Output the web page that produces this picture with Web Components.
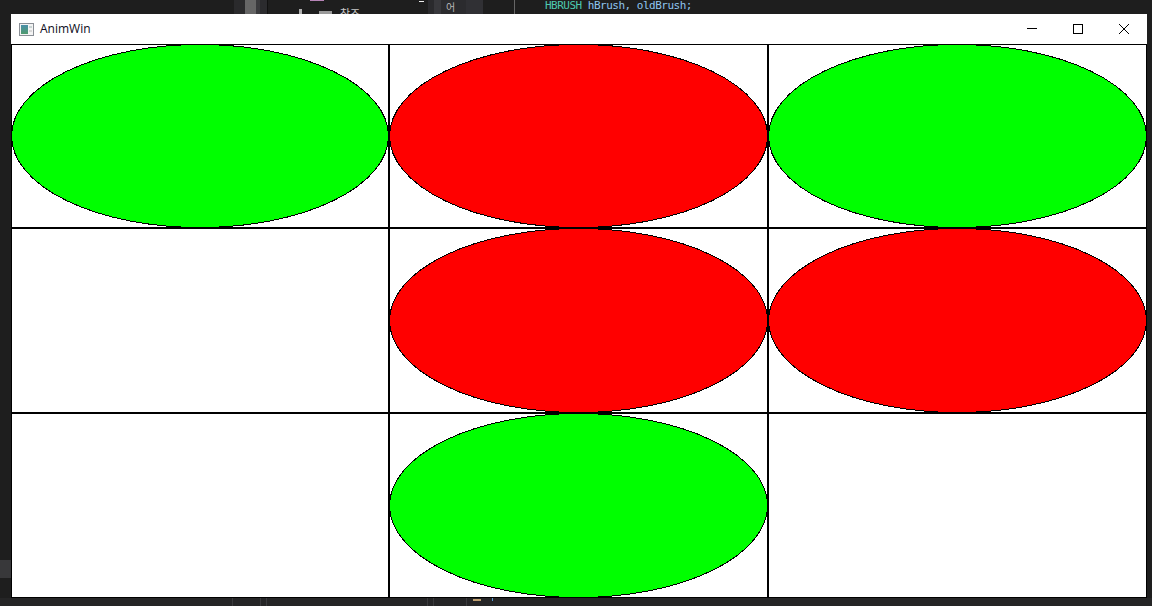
<!DOCTYPE html>
<html lang="ko">
<head>
<meta charset="utf-8">
<title>AnimWin</title>
<style>
  html, body { margin: 0; height: 100%; background: #1e1e1e; overflow: hidden; }
</style>
</head>
<body>
<ide-backdrop>
  <anim-window title-text="AnimWin">
    <tic-board cells="g r g . r r . g ."></tic-board>
  </anim-window>
</ide-backdrop>

<script>
class IdeBackdrop extends HTMLElement {
  constructor() {
    super();
    this.attachShadow({ mode: 'open' });
  }

  connectedCallback() {
    // scraps of the editor that show around the window
    const bands = [
      [234, 11, '#2a2a2c'], [245, 11, '#666'], [256, 4, '#3a3a3d'], [260, 7, '#2b2b2e'], [267, 1, '#111'],
      [428, 6, '#2a2a2d'], [434, 7, '#38383c'], [441, 25, '#2b2b2e'], [466, 17, '#303034'],
      [514, 1, '#666']
    ].map(([x, w, c]) => `<div class="scrap band" style="left:${x}px;width:${w}px;background:${c}"></div>`).join('');
    const ticks = [232, 260, 266, 427, 433, 466]
      .map((x) => `<div class="scrap tick" style="left:${x}px"></div>`).join('');

    this.shadowRoot.innerHTML = `
      <style>
        :host {
          display: block;
          position: relative;
          width: 1152px;
          height: 606px;
          box-sizing: border-box;
          padding: 14px 5px 8px 11px;
          background: #1e1e1e;
          overflow: hidden;
        }
        .scrap { position: absolute; white-space: pre; }
        .band { top: 0; height: 14px; }
        .code { left: 545px; top: 0; font: 11px/11px "DejaVu Sans Mono", monospace; color: #8fc4ee; letter-spacing: -.5px; }
        .code b { font-weight: normal; color: #4ec9b0; }
        .ref { left: 340px; top: 7px; font: 11px/13px "Noto Sans CJK KR", sans-serif; color: #c8c8c8; }
        .read { left: 446px; top: 0; font: 10px/14px "Noto Sans CJK KR", sans-serif; color: #b8b8b8; }
        .foot { bottom: 0; height: 8px; background: #252526; left: 0; right: 0; }
        .tick { bottom: 0; height: 8px; width: 1px; background: #3a3a3c; }
        .side { left: 0; top: 560px; width: 11px; height: 18px; background: #38383a; }
      </style>
      <div class="scrap foot"></div>
      <div class="scrap side"></div>
      ${bands}
      ${ticks}
      <div class="scrap" style="left:310px;top:0;width:14px;height:1px;background:#b784b7"></div>
      <div class="scrap" style="left:299px;top:9px;width:3px;height:5px;background:#b0b0b0"></div>
      <div class="scrap" style="left:319px;top:11px;width:13px;height:3px;background:#9a9a9a"></div>
      <div class="scrap" style="left:419px;top:1px;width:5px;height:1px;background:#eee"></div>
      <div class="scrap" style="left:473px;bottom:5px;width:8px;height:2px;background:#c0a070"></div>
      <div class="scrap" style="left:492px;bottom:5px;width:1px;height:3px;background:#5a9bd0"></div>
      <div class="scrap ref">참조</div>
      <div class="scrap read">어</div>
      <div class="scrap code"><b>HBRUSH</b> hBrush, oldBrush;</div>
      <slot></slot>
    `;
  }
}

class AnimWindow extends HTMLElement {
  constructor() {
    super();
    this.attachShadow({ mode: 'open' });
  }

  connectedCallback() {
    const title = this.getAttribute('title-text') || '';
    this.shadowRoot.innerHTML = `
      <style>
        :host {
          display: flex;
          flex-direction: column;
          position: relative;
          height: 100%;
          background: #fff;
        }
        .bar {
          flex: none;
          height: 30px;
          display: flex;
          align-items: center;
          padding-left: 8px;
          font: 12px "Open Sans", "Noto Sans", sans-serif;
          color: #0c0c20;
        }
        .icon { margin-right: 6px; flex: none; }
        .title { flex: 1; position: relative; top: -1px; }
        .btn { width: 46px; height: 30px; display: flex; align-items: center; justify-content: center; }
        .body { flex: 1; min-height: 0; }
      </style>
      <div class="bar">
        <svg class="icon" width="15" height="13" viewBox="0 0 15 13">
          <defs><linearGradient id="g" x1="0" y1="0" x2="0" y2="1"><stop offset="0" stop-color="#4a8fa8"/><stop offset="1" stop-color="#4f9a6e"/></linearGradient></defs>
          <rect x=".5" y=".5" width="14" height="12" fill="#f4f4f4" stroke="#8a8f96"/>
          <rect x="2" y="2" width="7" height="9" fill="url(#g)"/>
          <rect x="10" y="3" width="3" height="2" fill="#c9d4d4"/>
          <rect x="10" y="7" width="3" height="2" fill="#d8d8d8"/>
        </svg>
        <span class="title">${title}</span>
        <div class="btn"><svg width="10" height="10" viewBox="0 0 10 10"><path d="M0 4.5h10" stroke="#000"/></svg></div>
        <div class="btn"><svg width="10" height="10" viewBox="0 0 10 10"><rect x=".5" y=".5" width="9" height="9" fill="none" stroke="#000"/></svg></div>
        <div class="btn"><svg width="10" height="10" viewBox="0 0 10 10"><path d="M0 0l10 10M10 0L0 10" stroke="#000" fill="none"/></svg></div>
      </div>
      <div class="body"><slot></slot></div>
    `;
  }
}

class TicBoard extends HTMLElement {
  constructor() {
    super();
    this.attachShadow({ mode: 'open' });
  }

  connectedCallback() {
    const cells = (this.getAttribute('cells') || '').split(' ');
    const marks = cells.map((c) => `<tic-cell mark="${c}"></tic-cell>`).join('');
    this.shadowRoot.innerHTML = `
      <style>
        :host {
          display: grid;
          box-sizing: border-box;
          height: 100%;
          grid-template-columns: 376px 377px 377px;
          grid-template-rows: 182px 183px 183px;
          gap: 2px;
          padding: 1px;
          background: #000;
        }
      </style>
      ${marks}
    `;
  }
}

class TicCell extends HTMLElement {
  constructor() {
    super();
    this.attachShadow({ mode: 'open' });
  }

  connectedCallback() {
    const mark = this.getAttribute('mark');
    const fill = mark === 'g' ? '#00ff00' : '#ff0000';
    const shape = mark === '.' ? '' : `
      <svg shape-rendering="crispEdges">
        <ellipse fill="${fill}" stroke="#000" stroke-width="1"/>
      </svg>`;
    this.shadowRoot.innerHTML = `
      <style>
        :host { display: block; background: #fff; position: relative; }
        svg { display: block; width: 100%; height: 100%; overflow: visible; }
        ellipse { cx: 50%; cy: 50%; rx: calc(50% + .5px); ry: calc(50% + .5px); }
      </style>
      ${shape}
    `;
  }
}

customElements.define('ide-backdrop', IdeBackdrop);
customElements.define('anim-window', AnimWindow);
customElements.define('tic-board', TicBoard);
customElements.define('tic-cell', TicCell);
</script>
</body>
</html>
